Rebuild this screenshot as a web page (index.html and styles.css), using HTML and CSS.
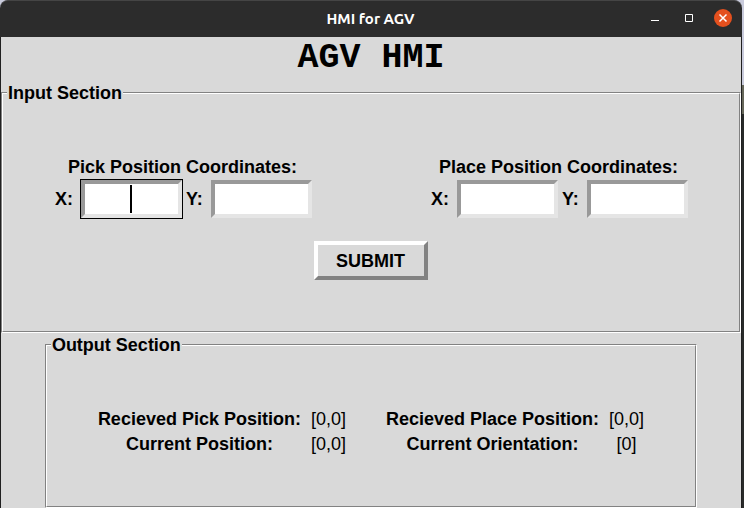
FILE: index.html
```html
<!DOCTYPE html>
<html lang="en">
<head>
<meta charset="utf-8">
<meta name="viewport" content="width=device-width, initial-scale=1">
<title>HMI for AGV</title>
<link rel="stylesheet" href="styles.css">
</head>
<body>
<div class="window">
  <header class="titlebar">
    <span class="titlebar-text">HMI for AGV</span>
    <div class="window-controls">
      <button type="button" class="control" aria-label="Minimize">
        <svg viewBox="0 0 20 20" width="20" height="20"><path d="M6 11h8v1H6z" fill="#fff"/></svg>
      </button>
      <button type="button" class="control" aria-label="Maximize">
        <svg viewBox="0 0 20 20" width="20" height="20"><path d="M6.5 5.5h7v7h-7z" fill="none" stroke="#fff"/></svg>
      </button>
      <button type="button" class="control" aria-label="Close">
        <svg viewBox="0 0 20 20" width="20" height="20"><circle cx="10" cy="9" r="9" fill="#e4501e"/><path d="M6.5 5.5l7 7M13.5 5.5l-7 7" fill="none" stroke="#fff" stroke-width="1.5"/></svg>
      </button>
    </div>
  </header>
  <main class="client">
    <h1 class="heading">AGV HMI</h1>
    <form>
      <fieldset class="frame frame-input">
        <legend class="legend">Input Section</legend>
        <div class="groups">
          <div class="group" role="group" aria-labelledby="pick">
            <h2 class="group-title" id="pick">Pick Position Coordinates:</h2>
            <label class="axis" for="pick-x">X:</label>
            <div class="entry">
              <input class="field field-active" id="pick-x" type="text">
              <span class="caret"></span>
            </div>
            <label class="axis" for="pick-y">Y:</label>
            <div class="entry"><input class="field" id="pick-y" type="text"></div>
          </div>
          <div class="group" role="group" aria-labelledby="place">
            <h2 class="group-title" id="place">Place Position Coordinates:</h2>
            <label class="axis" for="place-x">X:</label>
            <div class="entry"><input class="field" id="place-x" type="text"></div>
            <label class="axis" for="place-y">Y:</label>
            <div class="entry"><input class="field" id="place-y" type="text"></div>
          </div>
        </div>
        <button type="button" class="submit">SUBMIT</button>
      </fieldset>
    </form>
    <fieldset class="frame frame-output">
      <legend class="legend">Output Section</legend>
      <table class="readings">
        <tr>
          <th scope="row">Recieved Pick Position:</th><td>[0,0]</td>
          <th scope="row" class="second">Recieved Place Position:</th><td>[0,0]</td>
        </tr>
        <tr>
          <th scope="row">Current Position:</th><td>[0,0]</td>
          <th scope="row" class="second">Current Orientation:</th><td>[0]</td>
        </tr>
      </table>
    </fieldset>
  </main>
</div>
</body>
</html>
```
FILE: styles.css
```css
* {
  box-sizing: border-box;
}

body {
  margin: 0;
  min-height: 100vh;
  padding-right: 2px;
  background: linear-gradient(#c9cbdc 85px, #66675a 85px, #66675a 114px, #292b2a 114px);
  font-family: "Liberation Sans", Arial, sans-serif;
  font-size: 18px;
  line-height: 25px;
  color: #000;
}

.window {
  display: flex;
  flex-direction: column;
  min-height: 100vh;
}

.titlebar {
  display: grid;
  grid-template-columns: 1fr auto 1fr;
  align-items: center;
  height: 37px;
  padding: 0 5px 0 4px;
  border-top: 1px solid #454545;
  border-radius: 8px 8px 0 0;
  background: #2c2c2c;
  color: #fff;
}

.titlebar-text {
  grid-column: 2;
  padding-bottom: 2px;
  font-family: Ubuntu, "Noto Sans", sans-serif;
  font-size: 15px;
  font-weight: 600;
}

.window-controls {
  display: flex;
  justify-content: flex-end;
  gap: 14px;
  padding-right: 4px;
}

.control {
  display: flex;
  width: 20px;
  height: 20px;
  padding: 0;
  border: 0;
  background: none;
}

.client {
  flex: 1;
  border: solid #202020;
  border-width: 0 1px;
  background: #d9d9d9;
}

.heading {
  margin: 0;
  padding-bottom: 13px;
  font-family: "Liberation Mono", monospace;
  font-size: 35px;
  line-height: 42px;
  text-align: center;
}

/* Grooved frame: dark/light outer line with the reverse just inside it */
.frame {
  position: relative;
  min-width: 0;
  margin: 0;
  border: 1px solid;
  border-color: #828282 #fff #fff #828282;
}

.frame::before {
  content: "";
  position: absolute;
  inset: 0;
  border: 1px solid;
  border-color: #fff #828282 #828282 #fff;
  pointer-events: none;
}

.legend {
  position: absolute;
  top: -10px;
  left: 5px;
  padding: 0 1px;
  background: #d9d9d9;
  font-weight: bold;
  line-height: 21px;
}

.frame-input {
  padding: 62px 1px 52px 0;
}

.groups {
  display: flex;
  justify-content: center;
  gap: 115px;
}

.group {
  display: grid;
  grid-template-columns: 28px 103px 27px 103px;
  align-items: center;
}

.group-title {
  grid-column: 1 / -1;
  margin: 0;
  font-size: 18px;
  line-height: 24px;
  text-align: center;
}

.axis {
  padding-left: 3px;
  font-weight: bold;
}

.entry {
  position: relative;
  padding: 1px;
}

.field {
  display: block;
  width: 100%;
  height: 38px;
  padding: 0;
  border: 4px solid;
  border-color: #999 #e5e5e5 #e5e5e5 #999;
  border-radius: 0;
  outline: 0;
  background: #fff;
  font: inherit;
  text-align: center;
}

.field-active {
  outline: 1px solid #000;
}

.caret {
  position: absolute;
  top: 6px;
  left: 50%;
  width: 2px;
  height: 28px;
  margin-left: -2px;
  background: #000;
}

.submit {
  display: block;
  min-width: 114px;
  height: 39px;
  margin: 22px auto 0;
  padding: 1px 18px 0;
  border: 4px solid;
  border-color: #fff #828282 #828282 #fff;
  background: #d9d9d9;
  color: #000;
  font: inherit;
  font-weight: bold;
}

.frame-output {
  width: fit-content;
  margin: 11px auto 0;
  padding: 62px 47px 50px;
}

.readings {
  border-collapse: collapse;
}

.readings th,
.readings td {
  padding: 0 5px;
  text-align: center;
}

.readings .second {
  padding-left: 35px;
}
```
